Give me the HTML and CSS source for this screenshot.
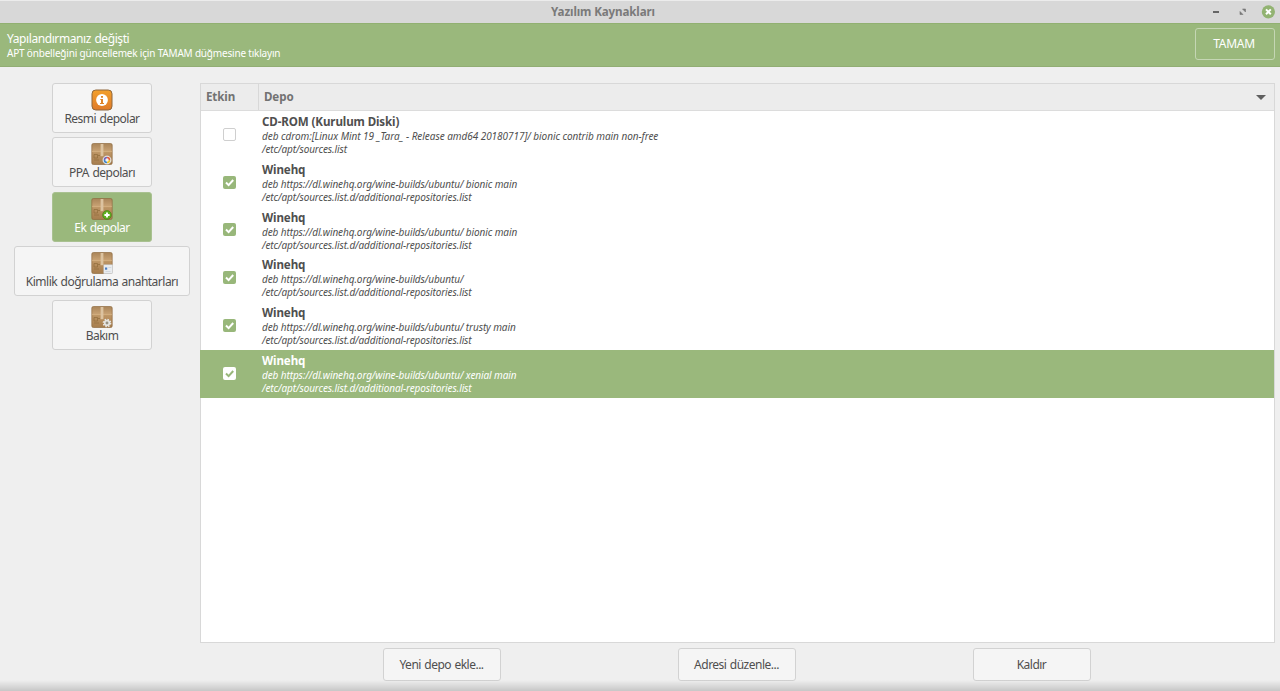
FILE: index.html
```html
<!DOCTYPE html>
<html lang="tr">
<head>
    <meta charset="UTF-8">
    <title>Yazılım Kaynakları</title>
    <link rel="stylesheet" href="styles.css">
</head>
<body>
    <svg class="defs" width="0" height="0">
        <defs>
            <linearGradient id="boxFill" x1="0" y1="0" x2="0" y2="1">
                <stop offset="0" stop-color="#a98458"/>
                <stop offset="0.38" stop-color="#c9a375"/>
                <stop offset="0.42" stop-color="#bd9565"/>
                <stop offset="1" stop-color="#a67d4d"/>
            </linearGradient>
            <linearGradient id="orangeFill" x1="0" y1="0" x2="0" y2="1">
                <stop offset="0" stop-color="#f3a02c"/>
                <stop offset="1" stop-color="#df7a29"/>
            </linearGradient>
            <symbol id="box" viewBox="0 0 22 22">
                <rect x="0.8" y="0.5" width="20.4" height="21" rx="1.6" fill="url(#boxFill)" stroke="#8f6c41" stroke-width="0.7"/>
                <path d="M1 8.6h20" stroke="#d5b183" stroke-width="0.7"/>
                <path d="M9.6 1h2.8v12.2H9.6z" fill="#dcc3a0"/>
                <path d="M3 11.5h3.5v3.5H3zM3 17h5M7 12.5h2" fill="none" stroke="#94703f" stroke-width="0.8"/>
            </symbol>
        </defs>
    </svg>

    <div class="titlebar">
        <span class="title">Yazılım Kaynakları</span>
        <div class="window-buttons">
            <svg width="10" height="14" viewBox="0 0 10 14"><path d="M3 7h6" stroke="#666" stroke-width="2"/></svg>
            <svg width="10" height="14" viewBox="0 0 10 14"><path d="M5.5 4h3v3zM3 6.5v3h3z" fill="#777" stroke="#777" stroke-width="0.6"/></svg>
            <svg width="14" height="14" viewBox="0 0 14 14"><circle cx="7.4" cy="6.8" r="6.6" fill="#92b372"/><path d="M5 4.4l4.8 4.8M9.8 4.4l-4.8 4.8" stroke="#fff" stroke-width="2"/></svg>
        </div>
    </div>

    <div class="infobar">
        <div>
            <div class="info-title">Yapılandırmanız değişti</div>
            <div class="info-text">APT önbelleğini güncellemek için TAMAM düğmesine tıklayın</div>
        </div>
        <button class="ok">TAMAM</button>
    </div>

    <div class="main">
        <div class="sidebar">
            <button class="nav">
                <svg width="22" height="22" viewBox="0 0 22 22"><rect x="1" y="1" width="20" height="20" rx="3.8" fill="url(#orangeFill)" stroke="#8e673c" stroke-width="1"/><circle cx="11" cy="11" r="5.9" fill="#fff"/><path d="M10 7h2v1.8h-2zM9.3 10h2.7v4h1v1H9v-1h1v-3h-.7z" fill="#df8429"/></svg>
                <span>Resmi depolar</span>
            </button>
            <button class="nav">
                <svg width="22" height="22" viewBox="0 0 22 22"><use href="#box"/><circle cx="16" cy="17" r="4.3" fill="#f2f2f2" stroke="#bbb" stroke-width="0.5"/><path d="M13.5 17a2.5 2.5 0 0 1 2.5-2.5" stroke="#7462b5" stroke-width="1.6" fill="none"/><path d="M16 14.5a2.5 2.5 0 0 1 2.5 2.5" stroke="#e35b3d" stroke-width="1.6" fill="none"/><path d="M18.5 17a2.5 2.5 0 0 1-2.5 2.5" stroke="#efc32c" stroke-width="1.6" fill="none"/><path d="M16 19.5a2.5 2.5 0 0 1-2.5-2.5" stroke="#3e85c9" stroke-width="1.6" fill="none"/></svg>
                <span>PPA depoları</span>
            </button>
            <button class="nav selected">
                <svg width="22" height="22" viewBox="0 0 22 22"><use href="#box"/><circle cx="16" cy="17" r="4.4" fill="#5fae20" stroke="#3f7e12" stroke-width="0.6"/><path d="M16 14.4v5.2M13.4 17h5.2" stroke="#fff" stroke-width="1.9"/></svg>
                <span>Ek depolar</span>
            </button>
            <button class="nav">
                <svg width="22" height="22" viewBox="0 0 22 22"><use href="#box"/><rect x="12.8" y="12.8" width="8.9" height="8.9" fill="#e9ecef" stroke="#c4c8cc" stroke-width="0.5"/><path d="M14 15.5h2.2v2.2H14z" fill="#4b7dc0"/><path d="M17.3 15.5h3M14.5 19.5h5" stroke="#ccd0d5" stroke-width="0.7"/></svg>
                <span>Kimlik doğrulama anahtarları</span>
            </button>
            <button class="nav">
                <svg width="22" height="22" viewBox="0 0 22 22"><use href="#box"/><circle cx="16" cy="17" r="3.6" fill="none" stroke="#e6e6e3" stroke-width="1.5" stroke-dasharray="1.5 1.33"/><circle cx="16" cy="17" r="2.3" fill="#999384" stroke="#e6e6e3" stroke-width="1.7"/></svg>
                <span>Bakım</span>
            </button>
        </div>

        <div class="content">
            <div class="list">
                <div class="list-header">
                    <div class="col-enabled">Etkin</div>
                    <div class="col-repo">Depo</div>
                    <div class="sort-arrow"></div>
                </div>
                <div class="row">
                    <div class="check"></div>
                    <div class="repo"><b>CD-ROM (Kurulum Diski)</b><i class="cdrom">deb cdrom:[Linux Mint 19 _Tara_ - Release amd64 20180717]/ bionic contrib main non-free</i><i>/etc/apt/sources.list</i></div>
                </div>
                <div class="row">
                    <div class="check on"><svg viewBox="0 0 13 13"><path d="M3 6.5l2.6 2.6L10.2 4"/></svg></div>
                    <div class="repo"><b>Winehq</b><i>deb https://dl.winehq.org/wine-builds/ubuntu/ bionic main</i><i>/etc/apt/sources.list.d/additional-repositories.list</i></div>
                </div>
                <div class="row">
                    <div class="check on"><svg viewBox="0 0 13 13"><path d="M3 6.5l2.6 2.6L10.2 4"/></svg></div>
                    <div class="repo"><b>Winehq</b><i>deb https://dl.winehq.org/wine-builds/ubuntu/ bionic main</i><i>/etc/apt/sources.list.d/additional-repositories.list</i></div>
                </div>
                <div class="row">
                    <div class="check on"><svg viewBox="0 0 13 13"><path d="M3 6.5l2.6 2.6L10.2 4"/></svg></div>
                    <div class="repo"><b>Winehq</b><i>deb https://dl.winehq.org/wine-builds/ubuntu/</i><i>/etc/apt/sources.list.d/additional-repositories.list</i></div>
                </div>
                <div class="row">
                    <div class="check on"><svg viewBox="0 0 13 13"><path d="M3 6.5l2.6 2.6L10.2 4"/></svg></div>
                    <div class="repo"><b>Winehq</b><i>deb https://dl.winehq.org/wine-builds/ubuntu/ trusty main</i><i>/etc/apt/sources.list.d/additional-repositories.list</i></div>
                </div>
                <div class="row selected">
                    <div class="check on"><svg viewBox="0 0 13 13"><path d="M3 6.5l2.6 2.6L10.2 4"/></svg></div>
                    <div class="repo"><b>Winehq</b><i>deb https://dl.winehq.org/wine-builds/ubuntu/ xenial main</i><i>/etc/apt/sources.list.d/additional-repositories.list</i></div>
                </div>
            </div>
            <div class="actions">
                <button>Yeni depo ekle...</button>
                <button>Adresi düzenle...</button>
                <button>Kaldır</button>
            </div>
        </div>
    </div>
    <div class="shadow"></div>
</body>
</html>
```
FILE: styles.css
```css
* {
    box-sizing: border-box;
}
body {
    margin: 0;
    height: 691px;
    overflow: hidden;
    display: flex;
    flex-direction: column;
    font-family: "Noto Sans", sans-serif;
    font-size: 11.6px;
    letter-spacing: -0.12px;
    color: #4f4f4f;
    background-color: #efefef;
}
button {
    font: inherit;
    font-size: 12px;
    letter-spacing: -0.51px;
    word-spacing: 0.8px;
    color: inherit;
    padding: 0;
    background-color: #f5f5f5;
    border: 1px solid #d2d2d2;
    border-radius: 3px;
    white-space: nowrap;
}
.defs {
    position: absolute;
}
.titlebar {
    height: 23px;
    flex: none;
    display: grid;
    grid-template-columns: 1fr auto 1fr;
    align-items: center;
    padding: 0 5px;
    background-color: #d8d8d8;
    border-top: 1px solid #ececec;
}
.title {
    grid-column: 2;
    margin: -1px 74px 0 0;
    font-weight: bold;
    color: #7a7a7a;
}
.window-buttons {
    display: flex;
    justify-content: flex-end;
    gap: 14px;
    margin-left: -74px;
}
.window-buttons svg:first-child {
    margin-right: 3px;
}
.infobar {
    height: 44px;
    flex: none;
    display: flex;
    justify-content: space-between;
    padding: 5px 5px 0 7px;
    color: #fff;
    background-color: #9ab87c;
    border-top: 1px solid #91b071;
    border-bottom: 1px solid #91ad74;
}
.info-title {
    margin-top: 1px;
    font-size: 12px;
    line-height: 17px;
    letter-spacing: -0.42px;
    word-spacing: 0.8px;
}
.info-text {
    font-size: 10px;
    line-height: 13px;
    letter-spacing: -0.19px;
}
.ok {
    width: 80px;
    height: 32px;
    margin-top: -1px;
    padding: 0 2px 1px 0;
    letter-spacing: -0.3px;
    background: none;
    border-color: #c5d6b4;
}
.main {
    flex: 1;
    display: flex;
    padding: 16px 5px 0 14px;
}
.sidebar {
    width: 176px;
    margin-right: 10px;
    display: flex;
    flex-direction: column;
    align-items: center;
    gap: 4.3px;
}
.nav {
    min-width: 100px;
    height: 50px;
    padding: 5px 11px 0;
    display: flex;
    flex-direction: column;
    align-items: center;
}
.nav svg {
    flex: none;
}
.nav span {
    line-height: 16px;
}
.nav.selected {
    color: #fff;
    background-color: #9ab87c;
    border-color: #a9c191;
}
.content {
    flex: 1;
}
.list {
    height: 560px;
    background-color: #fff;
    border: 1px solid #d8d8d8;
}
.list-header {
    height: 27px;
    display: flex;
    align-items: center;
    line-height: 26px;
    font-weight: bold;
    color: #727272;
    background-color: #ececec;
    border-bottom: 1px solid #dcdcdc;
}
.col-enabled {
    width: 58px;
    padding-left: 5px;
    border-right: 1px solid #d8d8d8;
}
.col-repo {
    flex: 1;
    padding-left: 5px;
}
.sort-arrow {
    margin: 1px 8px 0 0;
    border: 5px solid transparent;
    border-top-color: #5f5f5f;
    border-bottom: 0;
}
.row {
    height: 47.8px;
    display: flex;
    align-items: center;
    padding-left: 22px;
}
.check {
    width: 13px;
    height: 13px;
    margin: -1px 26px 0 0;
    border: 1px solid #cfcfcf;
    border-radius: 2px;
    background-color: #fff;
}
.check.on {
    border: 0;
    background-color: #98b77a;
}
.check svg {
    display: block;
    fill: none;
    stroke: #fff;
    stroke-width: 2;
}
.repo {
    margin-top: -0.6px;
}
.repo b, .repo i {
    display: block;
    white-space: nowrap;
}
.repo b {
    line-height: 17px;
}
.repo i {
    font-size: 10px;
    line-height: 13px;
    letter-spacing: -0.1px;
}
.repo .cdrom {
    letter-spacing: -0.05px;
}
.row.selected {
    margin-left: -1px;
    padding-left: 23px;
    color: #fff;
    background-color: #9ab87c;
}
.row.selected .check {
    background-color: #fff;
}
.row.selected svg {
    stroke: #98b77a;
}
.actions {
    display: flex;
    justify-content: center;
    gap: 177px;
    padding-top: 5px;
    margin-left: -2px;
}
.actions button {
    width: 118px;
    height: 33px;
}
/* shadow along the bottom edge of the window */
.shadow {
    position: absolute;
    left: 0;
    right: 0;
    bottom: 0;
    height: 11px;
    background: linear-gradient(rgba(0, 0, 0, 0), rgba(0, 0, 0, 0.17));
}
```
